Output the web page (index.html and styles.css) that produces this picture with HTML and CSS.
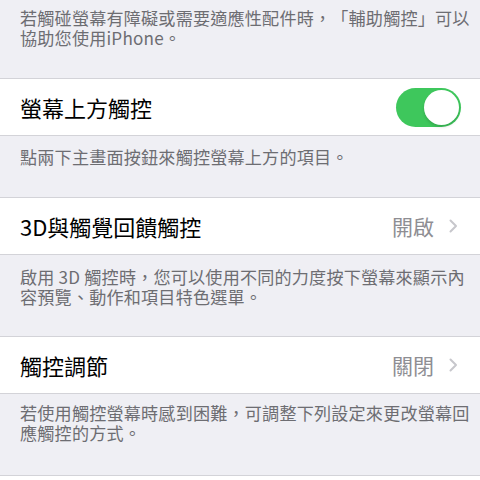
FILE: index.html
```html
<!DOCTYPE html>
<html lang="zh-Hant">
<head>
<meta charset="utf-8">
<link rel="stylesheet" href="styles.css">
</head>
<body>
<div class="footer f1">若觸碰螢幕有障礙或需要適應性配件時，「輔助觸控」可以<br>協助您使用iPhone。</div>
<div class="row">
  <span class="title">螢幕上方觸控</span>
  <span class="switch"><span class="knob"></span></span>
</div>
<div class="footer f2">點兩下主畫面按鈕來觸控螢幕上方的項目。</div>
<div class="row">
  <span class="title">3D與觸覺回饋觸控</span>
  <span class="detail"><span class="value">開啟</span>
    <svg class="chev" width="9" height="14" viewBox="0 0 9 14"><path d="M1.5 1.5 L7 7 L1.5 12.5" fill="none" stroke="#c7c7cc" stroke-width="2" stroke-linecap="round" stroke-linejoin="round"/></svg>
  </span>
</div>
<div class="footer f3">啟用 3D 觸控時，您可以使用不同的力度按下螢幕來顯示內<br>容預覽、動作和項目特色選單。</div>
<div class="row">
  <span class="title">觸控調節</span>
  <span class="detail"><span class="value">關閉</span>
    <svg class="chev" width="9" height="14" viewBox="0 0 9 14"><path d="M1.5 1.5 L7 7 L1.5 12.5" fill="none" stroke="#c7c7cc" stroke-width="2" stroke-linecap="round" stroke-linejoin="round"/></svg>
  </span>
</div>
<div class="footer f4">若使用觸控螢幕時感到困難，可調整下列設定來更改螢幕回<br>應觸控的方式。</div>
<div class="row empty"></div>
</body>
</html>
```
FILE: styles.css
```css
html, body {
  margin: 0;
  padding: 0;
  background: #efeff4;
  font-family: "Noto Sans CJK TC", "Noto Sans", sans-serif;
  overflow: hidden;
}
.footer {
  padding: 0 20px;
  font-size: 17.1px;
  line-height: 20px;
  letter-spacing: 0.2px;
  color: #6d6d72;
  white-space: nowrap;
  text-spacing-trim: space-all;
}
.f1 { padding-top: 8px; padding-bottom: 30px; }
.f2 { padding-top: 11px; padding-bottom: 30px; }
.f3 { padding-top: 12px; padding-bottom: 29px; }
.f4 { padding-top: 9px; padding-bottom: 32px; }
.row {
  background: #fff;
  height: 56px;
  border-top: 1px solid #d3d3d8;
  border-bottom: 1px solid #d3d3d8;
  display: flex;
  align-items: center;
  justify-content: space-between;
  padding: 0 19px 0 20px;
}
.title {
  font-size: 22px;
  color: #000;
}
.switch {
  width: 65px;
  height: 39px;
  border-radius: 20px;
  background: #3ec75c;
  display: flex;
  align-items: center;
  justify-content: flex-end;
  padding: 0 2px;
  box-sizing: border-box;
}
.knob {
  width: 35px;
  height: 35px;
  border-radius: 50%;
  background: #fff;
  box-shadow: 0 2px 3px rgba(0,0,0,0.15);
}
.detail {
  display: flex;
  align-items: center;
  gap: 15px;
  padding-right: 3px;
}
.value {
  font-size: 21px;
  color: #8e8e93;
}
.chev { display: block; }
```
